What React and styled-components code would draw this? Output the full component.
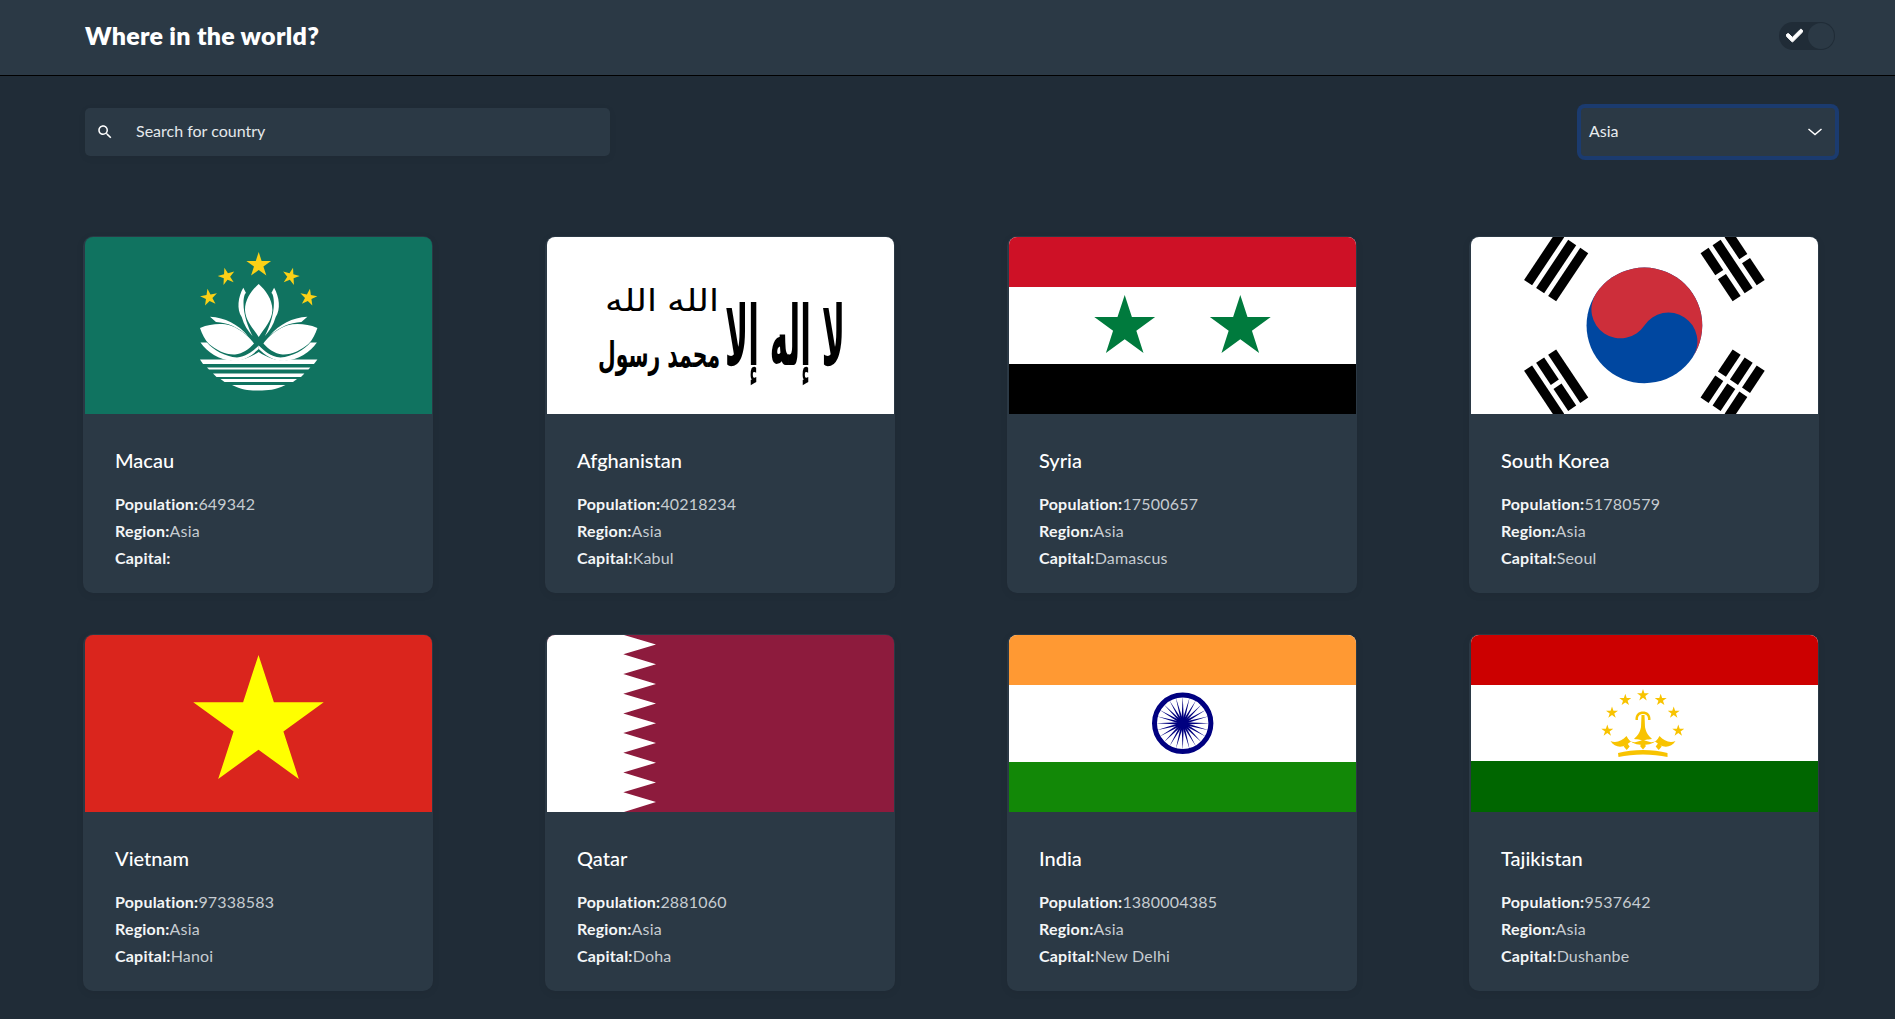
import React from 'react';
import styled, { createGlobalStyle } from 'styled-components';
import { FaCheck } from 'react-icons/fa';

const Global = createGlobalStyle`
  html, body { margin: 0; padding: 0; background: #202c37; height: 1019px; overflow: hidden; }
  body { font-family: "Lato", "Noto Sans", sans-serif; color: #fff; }
  * { box-sizing: border-box; }
`;

const Page = styled.div`
  width: 1895px;
  height: 1019px;
  overflow: hidden;
  background: #202c37;
`;
const Header = styled.header`
  height: 76px;
  background: #2b3945;
  border-bottom: 1px solid #000;
  padding: 0 60px 0 85px;
  display: flex;
  align-items: center;
  justify-content: space-between;
`;
const Title = styled.h1`
  margin: 0 0 6px;
  font-size: 25px;
  font-weight: 800;
  letter-spacing: 0.28px;
  line-height: 32px;
  color: #fff;
`;
const Toggle = styled.div`
  width: 56px;
  height: 28px;
  border-radius: 14px;
  background: #202c37;
  display: flex;
  align-items: center;
  justify-content: space-between;
  padding: 0 1px 0 7px;
  margin-bottom: 4px;
`;
const Knob = styled.span`
  width: 26px;
  height: 26px;
  border-radius: 50%;
  background: #2b3945;
`;
const Toolbar = styled.div`
  display: flex;
  justify-content: space-between;
  padding: 32px 60px 0 85px;
`;
const Search = styled.div`
  width: 525px;
  height: 48px;
  background: #2b3945;
  border-radius: 5px;
  box-shadow: 0 2px 9px rgba(0, 0, 0, 0.05);
  display: flex;
  align-items: center;
  padding-left: 11px;
  gap: 22px;
  font-size: 16px;
  color: #e4e8eb;
`;
const FieldText = styled.span`
  margin-bottom: 3px;
`;
const Select = styled.div`
  width: 254px;
  height: 48px;
  background: #2b3945;
  border-radius: 4px;
  box-shadow: 0 0 0 4px #1b3b6f;
  display: flex;
  align-items: center;
  justify-content: space-between;
  padding: 0 12px 0 8px;
  font-size: 16px;
  color: #e8ecef;
`;
const Grid = styled.main`
  display: grid;
  grid-template-columns: repeat(4, 350px);
  column-gap: 112px;
  row-gap: 41px;
  margin: 80px 0 0 83px;
`;
const Card = styled.article`
  width: 350px;
  height: 357px;
  background: #2b3945;
  border-radius: 10px;
  box-shadow: 0 2px 9px rgba(0, 0, 0, 0.06);
  padding: 1px 1px 0 2px;
`;
const FlagBox = styled.svg`
  display: block;
  width: 347px;
  height: 177px;
  border-radius: 8px 8px 0 0;
`;
const Body = styled.div`
  padding: 31px 30px 0;
`;
const Name = styled.h2`
  margin: 0 0 15px;
  font-size: 20px;
  line-height: 30px;
  font-weight: 500;
  color: #fff;
`;
const Line = styled.p`
  margin: 0;
  font-size: 16px;
  line-height: 27px;
  font-weight: 400;
  letter-spacing: 0.2px;
  color: #c6ccd1;
  white-space: nowrap;
`;
const Label = styled.strong`
  font-weight: 700;
  color: #f4f6f7;
`;

const star = (cx, cy, R, rot = 0) => {
  const r = R * 0.382;
  const p = [];
  for (let i = 0; i < 10; i++) {
    const a = ((-90 + rot + i * 36) * Math.PI) / 180;
    const d = i % 2 ? r : R;
    p.push(`${(cx + d * Math.cos(a)).toFixed(2)},${(cy + d * Math.sin(a)).toFixed(2)}`);
  }
  return p.join(' ');
};

const Flag = ({ bg, children }) => (
  <FlagBox viewBox="0 0 347 177" preserveAspectRatio="none">
    <rect width="347" height="177" fill={bg} />
    {children}
  </FlagBox>
);

const Mirror = ({ children }) => (
  <>
    {children}
    <g transform="translate(347.4 0) scale(-1 1)">{children}</g>
  </>
);

const Macau = () => (
  <Flag bg="#107360">
    <g fill="#fbd116">
      <polygon points={star(173.7, 28, 13)} />
      <polygon points={star(141.7, 39.5, 9, -15)} />
      <polygon points={star(205.7, 39.5, 9, 15)} />
      <polygon points={star(124, 60.5, 9, -10)} />
      <polygon points={star(223.4, 60.5, 9, 10)} />
    </g>
    <g fill="#fff">
      <path d="M173.7 47 C167 53 160 62 160 73 C160.5 84 168 91 173.7 100 C179.4 91 186.9 84 187.4 73 C187.4 62 180.4 53 173.7 47Z" />
      <Mirror>
        <path d="M158.3 50.7 C153 60 151.5 72 156.7 80 C159 88 163 94 167.5 99 C163 90 158.5 78 158.5 66 C158.5 60 160 56 161 56 Z" />
        <path d="M125 79.7 C140 80.5 153 87 163 99 C152 90 143 85.5 131 85 Z" />
        <path d="M115 91 C122 88 128 87 135 87 C142 87 148 89 152 91.5 C160 96 166 102 169 106.5 C164 112 158 116.5 150 117.5 C141 118 131 113 124 107 C120 103 117 97 115 91Z" />
        <path d="M115.5 105.5 L122 105.5 C128 113 140 119.5 152 120.5 C162 119.5 168 114 173.7 108.5 L173.7 112 C167 118 160 124 148 124 C134 123 122 115 115.5 105.5Z" />
      </Mirror>
      <path d="M115 122.5 H142 C152 125 163 122 173.7 115 C184.4 122 195.4 125 205.4 122.5 H232.4 L229 127 H118 Z" />
      <path d="M122 130.5 H225.4 L223.4 132.5 H124Z" />
      <path d="M128 136.5 H219.4 L216 140 H131.5Z" />
      <path d="M135.5 142 H212 L208 145 H139.5Z" />
      <path d="M147 148 H200.5 C190 153 183 153.5 173.7 153.5 C164 153.5 157 153 147 148Z" />
    </g>
  </Flag>
);

const Shahada = styled.text`
  font-family: 'DejaVu Sans', sans-serif;
  fill: #000;
  direction: rtl;
  text-anchor: middle;
`;

const Afghanistan = () => (
  <Flag bg="#fff">
    <Shahada transform="translate(238 128) scale(1 2.6)" fontSize="32" fontWeight="700" textLength="120" lengthAdjust="spacingAndGlyphs">لا إله إلا</Shahada>
    <Shahada transform="translate(146 74) scale(1 1.4)" fontSize="22" textLength="52" lengthAdjust="spacingAndGlyphs">الله</Shahada>
    <Shahada transform="translate(84 74) scale(1 1.4)" fontSize="22" textLength="52" lengthAdjust="spacingAndGlyphs">الله</Shahada>
    <Shahada transform="translate(112 130) scale(1 1.2)" fontSize="30" fontWeight="700" textLength="122" lengthAdjust="spacingAndGlyphs">محمد رسول</Shahada>
  </Flag>
);

const Syria = () => (
  <Flag bg="#fff">
    <rect width="347" height="50" fill="#ce1126" />
    <rect y="127" width="347" height="50" fill="#000" />
    <polygon fill="#007a3d" points={star(115.7, 90, 32)} />
    <polygon fill="#007a3d" points={star(231.3, 90, 32)} />
  </Flag>
);

const Trigram = ({ angle, bars }) => (
  <g transform={`rotate(${angle})`} fill="#000">
    {bars.map((broken, i) => {
      const y = -(20 + i * 3);
      return broken ? (
        <React.Fragment key={i}>
          <rect x="-6" y={y} width="5.5" height="2" />
          <rect x="0.5" y={y} width="5.5" height="2" />
        </React.Fragment>
      ) : (
        <rect key={i} x="-6" y={y} width="12" height="2" />
      );
    })}
  </g>
);

const Korea = () => (
  <Flag bg="#fff">
    <g transform="translate(173.4 88.4) scale(4.82)">
      <Trigram angle={-56.31} bars={[0, 0, 0]} />
      <Trigram angle={56.31} bars={[1, 0, 1]} />
      <Trigram angle={-123.69} bars={[0, 1, 0]} />
      <Trigram angle={123.69} bars={[1, 1, 1]} />
      <g transform="rotate(33.69)">
        <circle r="12" fill="#0047a0" />
        <path d="M-12 0 A12 12 0 0 1 12 0 A6 6 0 0 0 0 0 A6 6 0 0 1 -12 0Z" fill="#cd2e3a" />
      </g>
    </g>
  </Flag>
);

const Vietnam = () => (
  <Flag bg="#da251d">
    <polygon fill="#ff0" points={star(173.5, 88.5, 68.6)} />
  </Flag>
);

const Qatar = () => {
  const pts = ['0,0', '77,0'];
  for (let i = 0; i < 9; i++) {
    pts.push(`109,${(9.5 + i * 19.7).toFixed(1)}`);
    pts.push(`${i === 8 ? 77 : 76.3},${(19.3 + i * 19.7).toFixed(1)}`);
  }
  pts.push('0,177');
  return (
    <Flag bg="#8d1b3d">
      <polygon fill="#fff" points={pts.join(' ')} />
    </Flag>
  );
};

const India = () => (
  <Flag bg="#fff">
    <rect width="347" height="50" fill="#f93" />
    <rect y="127" width="347" height="50" fill="#128807" />
    <g transform="translate(173.7 88.3)">
      <circle r="28.2" fill="none" stroke="#000080" strokeWidth="5" />
      <circle r="5.5" fill="#000080" />
      {Array.from({ length: 24 }, (_, i) => (
        <path key={i} d="M-1.1 -4 L0 -27 L1.1 -4Z" fill="#000080" transform={`rotate(${i * 15})`} />
      ))}
    </g>
  </Flag>
);

const Tajikistan = () => (
  <Flag bg="#fff">
    <rect width="347" height="50" fill="#c00" />
    <rect y="126" width="347" height="51" fill="#060" />
    <g fill="#f8c300">
      <polygon points={star(172, 60.3, 6.3)} />
      <polygon points={star(154.3, 65, 6.3)} />
      <polygon points={star(189.7, 65, 6.3)} />
      <polygon points={star(141, 77.7, 6.3)} />
      <polygon points={star(202.7, 77.7, 6.3)} />
      <polygon points={star(136.3, 95.7, 6.3)} />
      <polygon points={star(207.3, 95.7, 6.3)} />
      <path d="M164.5 85 C164 79 168 76.5 172 76.5 C176 76.5 180 79 179.5 85 L177 85 C177.5 81 175 79 172 79 C169 79 166.5 81 167 85Z" />
      <path d="M170.5 80 H173.5 L174 92 C175 98 178 101 181 104 C176 105 173.5 104 172 107 C170.5 104 168 105 163 104 C166 101 169 98 170 92Z" />
      <path d="M139.5 106 C145 108.5 151 106 155.5 101 C158 106 161 108 165 107 L172 105 L179 107 C183 108 186 106 188.5 101 C193 106 199 108.5 204.5 106 C201 112 194 113 189 110 C186 108 185 107 184 106.5 C180 110 172 110 172 110 C172 110 164 110 160 106.5 C159 107 158 108 155 110 C150 113 143 112 139.5 106Z" />
      <polygon points="155.7,107.5 158.7,111.5 155.7,115 152.7,111.5" />
      <polygon points="172,107.5 175,111 172,114.5 169,111" />
      <polygon points="187.7,107.5 190.7,111.5 187.7,115 184.7,111.5" />
      <path d="M147 118 C162 114 182 114 196.5 118 L196.5 122 C182 118.5 162 118.5 147.5 122Z" />
    </g>
  </Flag>
);

const countries = [
  { name: 'Macau', population: 649342, capital: '', flag: Macau },
  { name: 'Afghanistan', population: 40218234, capital: 'Kabul', flag: Afghanistan },
  { name: 'Syria', population: 17500657, capital: 'Damascus', flag: Syria },
  { name: 'South Korea', population: 51780579, capital: 'Seoul', flag: Korea },
  { name: 'Vietnam', population: 97338583, capital: 'Hanoi', flag: Vietnam },
  { name: 'Qatar', population: 2881060, capital: 'Doha', flag: Qatar },
  { name: 'India', population: 1380004385, capital: 'New Delhi', flag: India },
  { name: 'Tajikistan', population: 9537642, capital: 'Dushanbe', flag: Tajikistan },
];

export default function App() {
  return (
    <Page>
      <Global />
      <Header>
        <Title>Where in the world?</Title>
        <Toggle>
          <FaCheck size={17} color="#fff" stroke="#fff" strokeWidth={30} />
          <Knob />
        </Toggle>
      </Header>
      <Toolbar>
        <Search>
          <svg width="18" height="18" viewBox="0 0 24 24" fill="#fff">
            <path d="M15.5 14h-.79l-.28-.27C15.41 12.59 16 11.11 16 9.5 16 5.91 13.09 3 9.5 3S3 5.91 3 9.5 5.91 16 9.5 16c1.61 0 3.09-.59 4.23-1.57l.27.28v.79l5 4.99L20.49 19l-4.99-5zm-6 0C7.01 14 5 11.99 5 9.5S7.01 5 9.5 5 14 7.01 14 9.5 11.99 14 9.5 14z" />
          </svg>
          <FieldText>Search for country</FieldText>
        </Search>
        <Select>
          <FieldText>Asia</FieldText>
          <svg width="16" height="10" viewBox="0 0 16 10" fill="none" stroke="#fff" strokeWidth="1.5">
            <path d="M1.5 2 L8 7.5 L14.5 2" />
          </svg>
        </Select>
      </Toolbar>
      <Grid>
        {countries.map(({ name, population, capital, flag: F }) => (
          <Card key={name}>
            <F />
            <Body>
              <Name>{name}</Name>
              <Line><Label>Population:</Label>{population}</Line>
              <Line><Label>Region:</Label>Asia</Line>
              <Line><Label>Capital:</Label>{capital}</Line>
            </Body>
          </Card>
        ))}
      </Grid>
    </Page>
  );
}
